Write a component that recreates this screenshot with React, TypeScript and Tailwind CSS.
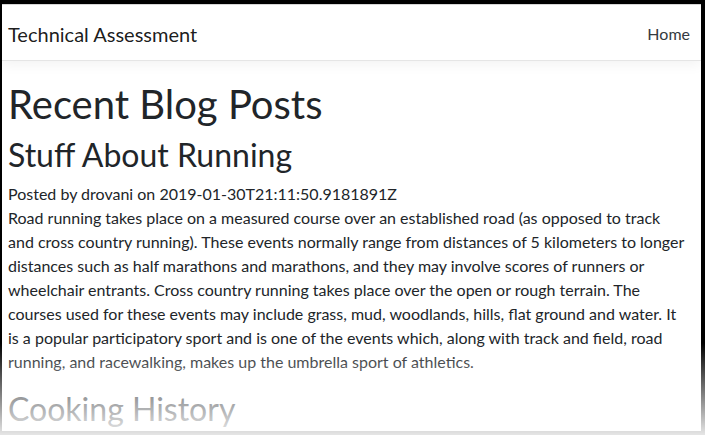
import React from 'react';

const font = { fontFamily: 'Lato, "Liberation Sans", sans-serif' };

const lines = [
  'Road running takes place on a measured course over an established road (as opposed to track',
  'and cross country running). These events normally range from distances of 5 kilometers to longer',
  'distances such as half marathons and marathons, and they may involve scores of runners or',
  'wheelchair entrants. Cross country running takes place over the open or rough terrain. The',
  'courses used for these events may include grass, mud, woodlands, hills, flat ground and water. It',
  'is a popular participatory sport and is one of the events which, along with track and field, road',
  'running, and racewalking, makes up the umbrella sport of athletics.',
];

const App: React.FC = () => {
  return (
    <div className="relative w-[705px] h-[435px] overflow-hidden bg-black pt-[4px] pl-[2px] pr-[4px] pb-[4px]" style={font}>
      <div className="h-full bg-white text-[#212529] overflow-hidden">
        {/* Navbar */}
        <nav className="flex items-center justify-between h-[57px] pt-[2px] border-t border-b border-t-[#d6d6d6] border-b-[#e5e5e5] bg-white px-[6px] shadow-[0_4px_12px_rgba(0,0,0,0.05)] mb-[19px]">
          <span className="text-[20px] leading-[30px] text-black/90">Technical Assessment</span>
          <span className="text-[16px] leading-6 text-[#343a40] pr-[5px]">Home</span>
        </nav>

        <main className="px-[6px]">
          <h1 className="text-[40px] leading-[48px] font-normal mb-2">Recent Blog Posts</h1>
          <article>
            <h2 className="text-[32px] leading-[38px] font-normal mb-2">Stuff About Running</h2>
            <div className="text-[16px] leading-6">Posted by drovani on 2019-01-30T21:11:50.9181891Z</div>
            <p className="text-[16px] leading-6 mb-4">
              {lines.map((l, i) => (
                <React.Fragment key={i}>
                  {l}
                  {i < lines.length - 1 && <br />}
                </React.Fragment>
              ))}
            </p>
          </article>
          <article>
            <h2 className="text-[32px] leading-[38px] font-normal mb-2">Cooking History</h2>
          </article>
        </main>
      </div>

      {/* bottom fade */}
      <div className="pointer-events-none absolute left-0 right-0 bottom-0 h-[92px] bg-linear-to-b from-white/0 to-white/[0.9]" />
    </div>
  );
};

export default App;
